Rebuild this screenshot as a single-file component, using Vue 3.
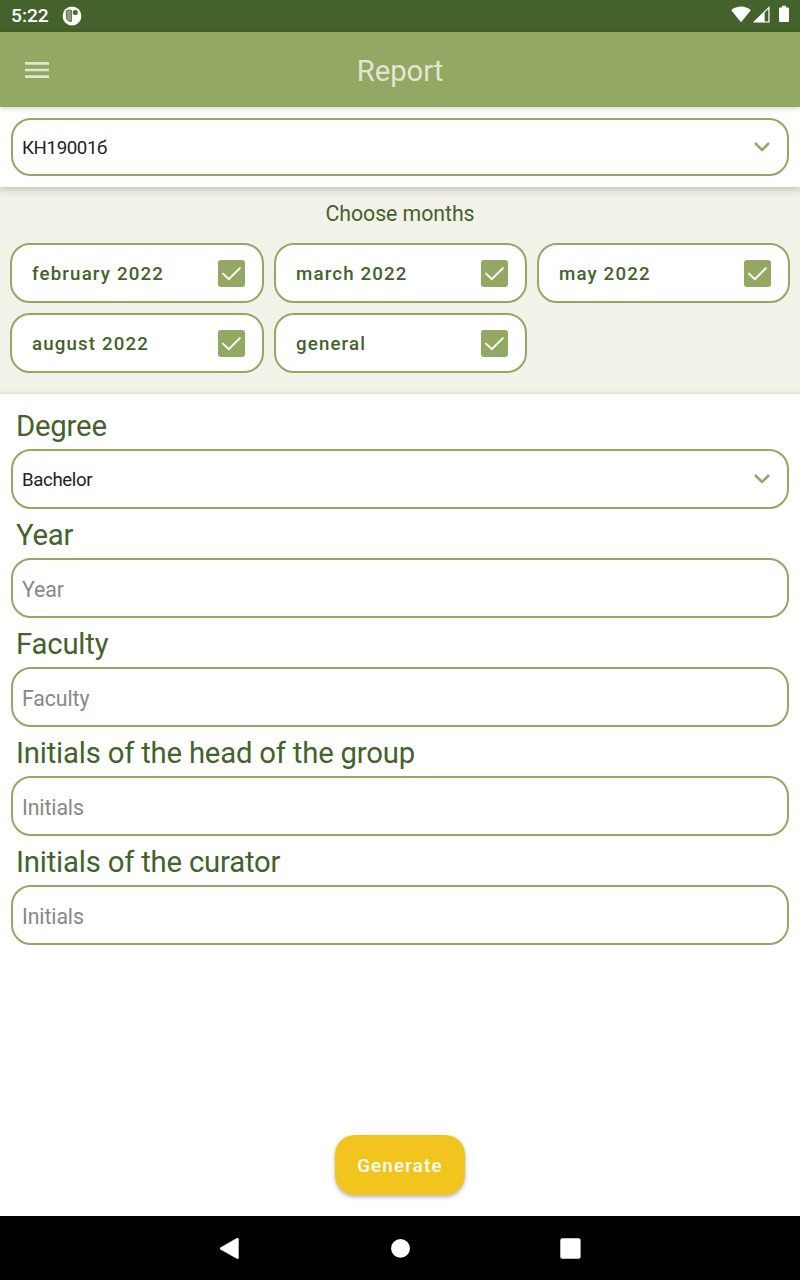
<script setup>
const months = ['february 2022', 'march 2022', 'may 2022', 'august 2022', 'general']
const fields = [
  { label: 'Degree', value: 'Bachelor', select: true },
  { label: 'Year', placeholder: 'Year' },
  { label: 'Faculty', placeholder: 'Faculty' },
  { label: 'Initials of the head of the group', placeholder: 'Initials' },
  { label: 'Initials of the curator', placeholder: 'Initials' },
]
</script>

<template>
  <div class="screen">
    <div class="status">
      <span class="clock">5:22</span>
      <svg class="app-dot" width="20" height="20" viewBox="0 0 20 20">
        <circle cx="10" cy="10" r="9.4" fill="#fff" />
        <path d="M5 4.2H9.4V15.6Q4.4 15.4 4.4 10.6V5Q4.4 4.2 5 4.2Z" fill="#8fa07f" stroke="#57723f" stroke-width="1" />
        <rect x="10.8" y="4" width="5" height="5" rx="2" fill="#4d6a35" />
      </svg>
      <svg class="signals" width="62" height="20" viewBox="0 0 62 20">
        <path d="M1.2 5.2C6.8 0.2 15.2 0.2 20.8 5.2L11 17.2Z" fill="#fff" />
        <path fill-rule="evenodd" d="M22.8 17.6L39.6 1V17.6ZM34.8 7.6V16.2H38.2V4.2Z" fill="#fff" />
        <path d="M34.8 7.6L38.2 4.2V16.2H34.8Z" fill="#44622b" />
        <path d="M49.9 2.6H52V0.8H56V2.6H58Q59 2.6 59 3.6V16Q59 17 58 17H50.2Q49 17 49 16V3.6Q49 2.6 49.9 2.6Z" fill="#fff" />
      </svg>
    </div>
    <header class="appbar">
      <svg class="menu" width="24" height="16" viewBox="0 0 24 16">
        <path d="M0 1.4H24M0 8H24M0 14.6H24" stroke="#e1e6d4" stroke-width="2.7" />
      </svg>
      <h1 class="title">Report</h1>
    </header>
    <section class="group-bar">
      <div class="box select group">
        <span>КН19001б</span>
        <svg width="18" height="12" viewBox="0 0 18 12"><path d="M2 2L9 9L16 2" fill="none" stroke="#93a862" stroke-width="2.6" /></svg>
      </div>
    </section>
    <section class="months">
      <p class="months-title">Choose months</p>
      <div class="grid">
        <div v-for="m in months" :key="m" class="chip">
          <span>{{ m }}</span>
          <svg width="27" height="27" viewBox="0 0 27 27">
            <rect width="27" height="27" rx="3" fill="#93a862" />
            <path d="M4.4 13.1L10.8 19.2L22.4 7.6" fill="none" stroke="#fff" stroke-width="2" />
          </svg>
        </div>
      </div>
    </section>
    <main class="form">
      <div v-for="f in fields" :key="f.label" class="field">
        <div class="label">{{ f.label }}</div>
        <div v-if="f.select" class="box select">
          <span>{{ f.value }}</span>
          <svg width="18" height="12" viewBox="0 0 18 12"><path d="M2 2L9 9L16 2" fill="none" stroke="#93a862" stroke-width="2.6" /></svg>
        </div>
        <div v-else class="box hint">{{ f.placeholder }}</div>
      </div>
      <button class="generate">Generate</button>
    </main>
    <nav class="nav">
      <svg width="800" height="64" viewBox="0 0 800 64" fill="#fff">
        <path d="M220.4 31.4L236.5 22.3Q238.7 21.3 238.7 23.3V41.7Q238.7 43.6 236.5 42.5L220.4 33.4Q219.2 32.4 220.4 31.4Z" />
        <circle cx="400.5" cy="32.4" r="9.4" />
        <rect x="560.3" y="22.3" width="20.3" height="20.4" rx="2" />
      </svg>
    </nav>
  </div>
</template>

<style>
body { margin: 0; }
</style>

<style scoped>
.screen { width: 800px; height: 1280px; display: flex; flex-direction: column; background: #fff; font-family: Roboto, "Liberation Sans", sans-serif; overflow: hidden; }
.status { flex: none; height: 32px; box-sizing: border-box; padding: 0 8px 0 11px; display: flex; align-items: center; background: #44622b; color: #fff; }
.clock { font-size: 19.2px; font-weight: 500; line-height: 32px; width: 51px; }
.signals { margin-left: auto; margin-top: -2px; }
.appbar { flex: none; height: 75px; position: relative; z-index: 2; display: flex; align-items: center; background: #93a862; box-shadow: 0 1px 5px rgba(0, 0, 0, .2); }
.menu { margin-left: 25px; width: 24px; }
.title { flex: 1; margin: 3px 49px 0 0; text-align: center; font-size: 29.3px; line-height: 40px; font-weight: 400; letter-spacing: -.1px; color: #e1e6d4; }
.group-bar { flex: none; height: 80px; box-sizing: border-box; padding: 11px; position: relative; z-index: 1; background: #fff; box-shadow: 0 2px 8px rgba(60, 60, 30, .3); }
.box { box-sizing: border-box; height: 60px; border: 2px solid #93a862; border-radius: 20px; padding: 0 16px 0 9px; background: #fff; display: flex; align-items: center; }
.group { height: 58px; }
.select { justify-content: space-between; font-size: 18.7px; color: #222; letter-spacing: -.4px; }
.select span, .chip span { padding-top: 2px; }
.hint { font-size: 21.3px; letter-spacing: -.1px; color: #888; padding-top: 3px; }
.months { flex: none; height: 207px; box-sizing: border-box; padding: 11px 10px 0; background: #f2f2e9; }
.months-title { margin: 0 0 13px; height: 32px; line-height: 32px; text-align: center; font-size: 21.3px; letter-spacing: -.05px; color: #44622b; }
.grid { display: grid; grid-template-columns: 254px 253px 253px; gap: 10px; }
.chip { box-sizing: border-box; height: 60px; border: 2px solid #93a862; border-radius: 20px; padding: 0 17px 0 20px; background: #fff; display: flex; align-items: center; justify-content: space-between; font-size: 18.7px; font-weight: 500; letter-spacing: 1.15px; color: #44622b; }
.form { flex: 1; position: relative; z-index: 1; padding: 6px 11px 0; background: #fff; box-shadow: 0 0 4px rgba(60, 60, 30, .18); display: flex; flex-direction: column; }
.label { height: 49px; line-height: 52px; padding-left: 5px; font-size: 29.3px; letter-spacing: -.2px; color: #44622b; }
.generate { margin: auto auto 21px; width: 130px; height: 60px; border: 0; border-radius: 20px; padding: 2px 0 0; background: #f1c51d; color: #fff; font: 500 18.7px Roboto, sans-serif; letter-spacing: 1.25px; box-shadow: 0 2px 4px rgba(0, 0, 0, .3); }
.nav { flex: none; height: 64px; position: relative; z-index: 2; background: #000; }
.nav svg { display: block; }
</style>
